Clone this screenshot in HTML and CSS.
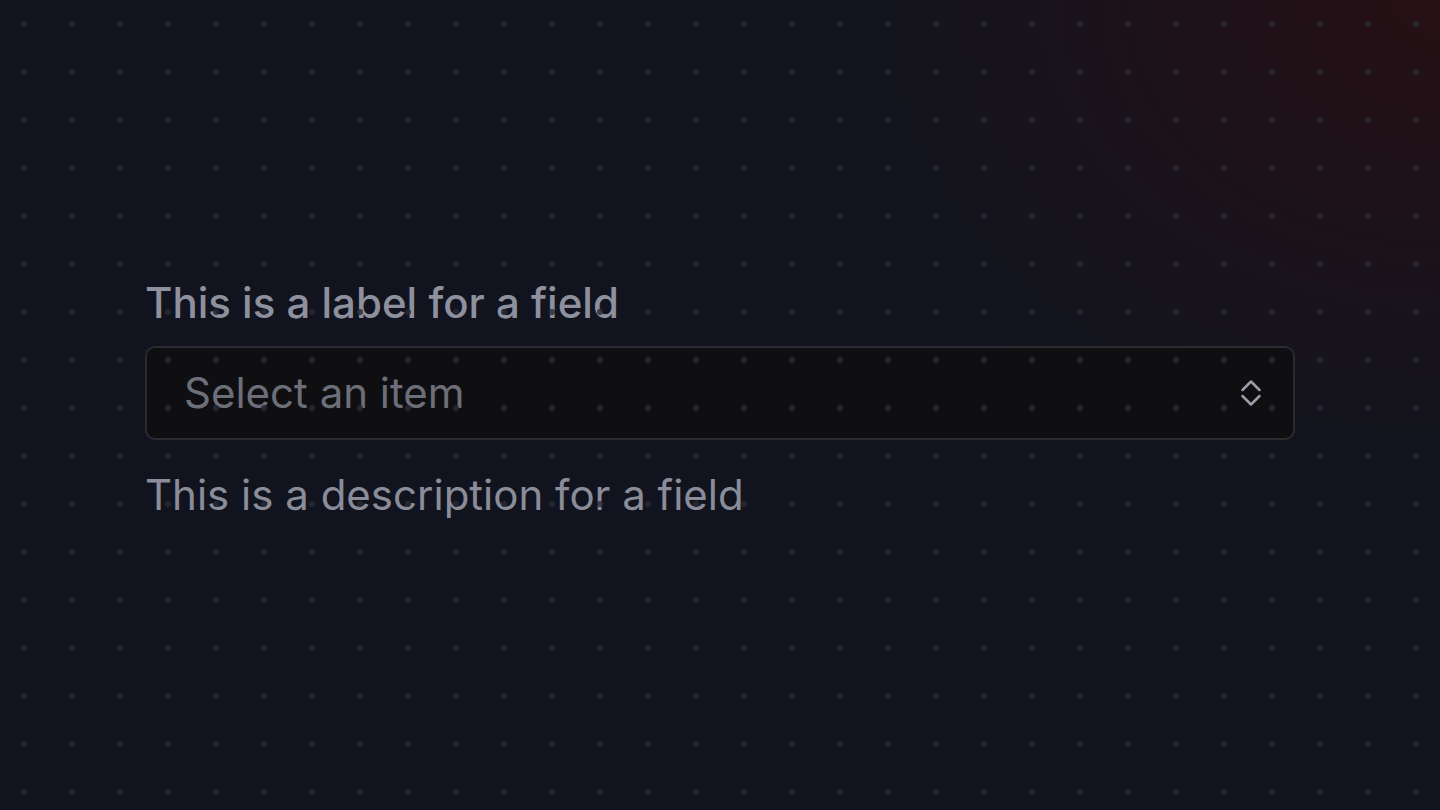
FILE: index.html
```html
<!DOCTYPE html>
<html>
<head>
<meta charset="utf-8">
<link rel="stylesheet" href="styles.css">
</head>
<body>
<div class="page">
  <div class="field">
    <label class="label">This is a label for a field</label>
    <div class="select">
      <span class="placeholder">Select an item</span>
      <svg class="chev" width="22" height="32" viewBox="0 0 22 32" fill="none" stroke="currentColor" stroke-width="2.5" stroke-linecap="round" stroke-linejoin="round">
        <path d="M2.5 13 L11 4.5 L19.5 13"/>
        <path d="M2.5 19 L11 27.5 L19.5 19"/>
      </svg>
    </div>
    <p class="desc">This is a description for a field</p>
  </div>
  <div class="dots"></div>
</div>
</body>
</html>
```
FILE: styles.css
```css
html, body {
  margin: 0;
  padding: 0;
  width: 1440px;
  height: 810px;
  overflow: hidden;
}
body {
  font-family: Inter, "Noto Sans", sans-serif;
  background: #11141e;
}
.page {
  position: relative;
  width: 1440px;
  height: 810px;
  background:
    radial-gradient(ellipse 900px 700px at 100% 0%, rgba(40, 16, 20, 0.9), rgba(40, 16, 20, 0) 70%),
    #11141e;
  display: flex;
  flex-direction: column;
  padding: 278px 145px 0;
  box-sizing: border-box;
}
.field {
  display: flex;
  flex-direction: column;
}
.label {
  font-size: 42px;
  font-weight: 500;
  color: #8e909d;
  line-height: 50px;
  margin-bottom: 18px;
}
.select {
  height: 94px;
  box-sizing: border-box;
  border: 2px solid #2a2a30;
  border-radius: 10px;
  background: #0f0f12;
  display: flex;
  align-items: center;
  justify-content: space-between;
  padding: 0 31px 0 37px;
  line-height: 50px;
}
.placeholder {
  font-size: 42px;
  color: #6c6e79;
}
.chev {
  color: #9a9ca8;
  display: block;
}
.desc {
  margin: 30px 0 0;
  font-size: 42px;
  color: #8a8c99;
  line-height: 50px;
}
.dots {
  position: absolute;
  inset: 0;
  pointer-events: none;
  background-image: radial-gradient(circle at 24px 24px, rgba(40, 42, 54, 0.8) 2.8px, transparent 3.4px);
  background-size: 48px 48px;
}
```
